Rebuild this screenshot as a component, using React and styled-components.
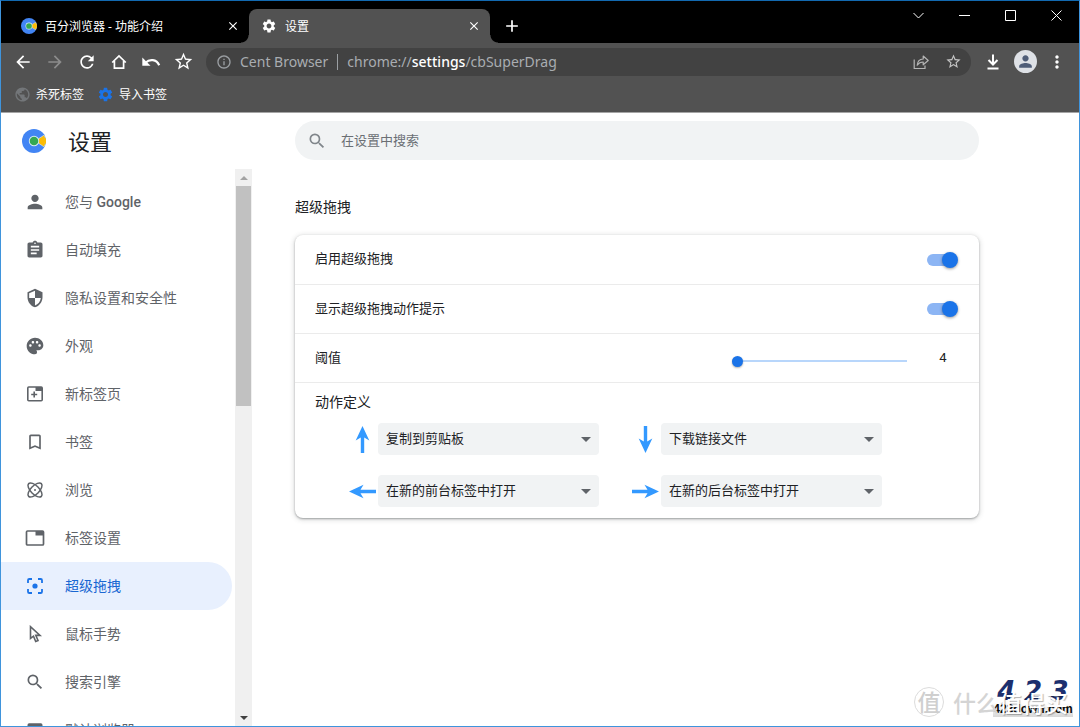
import React, { useState } from "react";
import styled, { createGlobalStyle, css } from "styled-components";
import {
  MdPerson, MdAssignment, MdSecurity, MdPalette, MdBookmarkBorder, MdSearch,
  MdWebAsset, MdSettings, MdPublic, MdStarBorder, MdInfoOutline, MdMoreVert,
  MdRefresh, MdArrowBack, MdArrowForward, MdClose, MdAdd,
} from "react-icons/md";

const uiFont = `"Noto Sans", "Noto Sans CJK SC", sans-serif`;
const pageFont = `Roboto, "Noto Sans CJK SC", sans-serif`;

const GlobalStyle = createGlobalStyle`
  * { box-sizing: border-box; }
  body { margin: 0; background: #fff; font-family: ${pageFont}; }
  button, input, select { font: inherit; color: inherit; }
  h1, h2, h3, ul { margin: 0; padding: 0; font-weight: 400; }
  ul { list-style: none; }
  svg { display: block; flex: none; }
`;

const Window = styled.div`
  position: relative;
  display: flex;
  flex-direction: column;
  height: 100vh;
  overflow: hidden;
  border: 1px solid #3f94dc;
  border-top-color: #1269b0;
`;

/* ---------- tab strip ---------- */

const TabStrip = styled.header`
  display: flex;
  flex: none;
  height: 42px;
  background: #000;
  color: #fff;
  font-family: ${uiFont};
  font-size: 12px;
`;

const Tab = styled.div`
  position: relative;
  display: flex;
  align-items: center;
  gap: 8px;
  flex: 0 1 ${(p) => (p.$active ? 241 : 248)}px;
  min-width: 0;
  margin-top: 8px;
  padding: 0 8px 0 ${(p) => (p.$active ? 12 : 20)}px;
  border-radius: 8px 8px 0 0;
  ${(p) =>
    p.$active &&
    css`
      background: #525252;
      &::before,
      &::after {
        content: "";
        position: absolute;
        bottom: 0;
        width: 8px;
        height: 8px;
      }
      &::before {
        right: 100%;
        background: radial-gradient(circle at 0 0, transparent 7px, #525252 8px);
      }
      &::after {
        left: 100%;
        background: radial-gradient(circle at 100% 0, transparent 7px, #525252 8px);
      }
    `}
`;

const TabTitle = styled.span`
  flex: 1;
  overflow: hidden;
  white-space: nowrap;
`;

const PlainButton = styled.button`
  display: flex;
  align-items: center;
  justify-content: center;
  flex: none;
  width: ${(p) => p.$w || 32}px;
  height: ${(p) => p.$h || 28}px;
  padding: 0;
  border: 0;
  background: none;
  color: ${(p) => p.$tone || "#fff"};
`;

const NewTab = styled(PlainButton)`
  margin: 11px 0 0 6px;
`;

const WindowControls = styled.div`
  display: flex;
  margin-left: auto;
`;

/* ---------- toolbar ---------- */

const Toolbar = styled.div`
  display: flex;
  align-items: center;
  flex: none;
  height: 37px;
  padding: 0 6px;
  background: #525252;
`;

const Omnibox = styled.div`
  display: flex;
  align-items: center;
  flex: 1;
  min-width: 0;
  height: 28px;
  margin: 0 6px 0 7px;
  padding: 0 2px 0 10px;
  border-radius: 14px;
  background: #424242;
  color: #9b9fa3;
`;

const Address = styled.div`
  display: flex;
  align-items: center;
  flex: 1;
  min-width: 0;
  gap: 9px;
  margin-left: 8px;
  font-family: ${uiFont};
  font-size: 14px;
  line-height: 20px;
  color: #a9adb1;
  white-space: nowrap;
  overflow: hidden;

  b {
    font-weight: 500;
    color: #fff;
  }
`;

const AddressDivider = styled.span`
  width: 1px;
  height: 16px;
  background: #9b9fa3;
`;

const Avatar = styled.span`
  display: flex;
  align-items: center;
  justify-content: center;
  width: 23px;
  height: 23px;
  border-radius: 50%;
  background: #dee1e6;
  color: #4f5d78;
`;

const BookmarkBar = styled.nav`
  display: flex;
  align-items: center;
  flex: none;
  gap: 13px;
  height: 33px;
  padding: 0 13px 4px;
  background: #525252;
  border-bottom: 1px solid #a5a5a5;
`;

const Bookmark = styled.a`
  display: flex;
  align-items: center;
  gap: 5px;
  color: #fff;
  font-family: ${uiFont};
  font-size: 12px;
  text-decoration: none;
`;

/* ---------- settings page ---------- */

const Page = styled.div`
  display: flex;
  flex: 1;
  min-height: 0;
  background: #fff;
`;

const Sidebar = styled.aside`
  display: flex;
  flex-direction: column;
  flex: none;
  width: 251px;
`;

const Brand = styled.div`
  display: flex;
  align-items: center;
  flex: none;
  gap: 22px;
  height: 56px;
  padding-left: 21px;

  h1 {
    padding-top: 4px;
    font-size: 22px;
    line-height: 28px;
    color: #202124;
  }
`;

const NavArea = styled.div`
  display: flex;
  flex: 1;
  min-height: 0;
`;

const NavList = styled.ul`
  flex: 1;
  overflow: hidden;
  padding: 9px 3px 0 0;
`;

const NavLink = styled.a`
  display: flex;
  align-items: center;
  gap: 20px;
  height: 48px;
  padding-left: 24px;
  border-radius: 0 24px 24px 0;
  background: ${(p) => (p.$active ? "#e8f0fe" : "transparent")};
  color: ${(p) => (p.$active ? "#1967d2" : "#5f6368")};
  font-size: 14px;
  line-height: 20px;
  text-decoration: none;

  b {
    font-weight: 500;
  }
`;

const NavIcon = styled.span`
  display: flex;
  justify-content: center;
  width: 20px;
`;

const ScrollTrack = styled.div`
  display: flex;
  flex-direction: column;
  flex: none;
  width: 17px;
  background: #f0f0f0;
`;

const ScrollArrow = styled.span`
  display: flex;
  align-items: center;
  justify-content: center;
  flex: none;
  height: 17px;
  color: ${(p) => p.$tone};
`;

const ScrollRail = styled.span`
  flex: 1;
  padding: 0 1px;
`;

const ScrollThumb = styled.span`
  display: block;
  height: 42%;
  background: #c1c1c1;
`;

const Main = styled.main`
  flex: 1;
  min-width: 0;
  padding: 8px 100px 24px 43px;
`;

const SearchBox = styled.label`
  display: flex;
  align-items: center;
  gap: 14px;
  height: 39px;
  padding: 0 12px;
  border-radius: 20px;
  background: #f1f3f4;
  color: #80868b;

  input {
    flex: 1;
    min-width: 0;
    padding: 0;
    border: 0;
    outline: 0;
    background: none;
    font-size: 13px;
    color: #202124;
  }
  input::placeholder {
    color: #6b6f74;
    opacity: 1;
  }
`;

const SectionTitle = styled.h2`
  margin: 37px 0 18px;
  font-size: 14px;
  line-height: 20px;
  color: #202124;
`;

const Card = styled.section`
  border-radius: 8px;
  background: #fff;
  box-shadow: 0 1px 2px rgba(60, 64, 67, 0.4), 0 1px 5px 1px rgba(60, 64, 67, 0.18);
  color: #202124;
  font-size: 13px;
`;

const Row = styled.div`
  display: flex;
  align-items: center;
  justify-content: space-between;
  height: 49px;
  padding: 0 20px;

  label {
    padding-bottom: 4px;
  }
  & + & {
    border-top: 1px solid #ebebeb;
  }
`;

const Switch = styled.input.attrs({ type: "checkbox", role: "switch" })`
  appearance: none;
  display: flex;
  align-items: center;
  width: 28px;
  height: 12px;
  margin: 0 4px 0 0;
  border-radius: 6px;
  background: #bdc1c6;

  &::before {
    content: "";
    flex: none;
    width: 16px;
    height: 16px;
    border-radius: 50%;
    background: #fff;
    box-shadow: 0 1px 3px rgba(0, 0, 0, 0.4);
  }
  &:checked {
    background: #8cb5f4;
  }
  &:checked::before {
    margin-left: 15px;
    background: #1a73e8;
  }
`;

const SliderGroup = styled.div`
  display: flex;
  align-items: center;
  gap: 20px;
`;

const Slider = styled.input.attrs({ type: "range" })`
  appearance: none;
  width: 175px;
  height: 12px;
  margin: 6px 0 0;
  background: linear-gradient(#b8d6fb, #b8d6fb) center / 100% 2px no-repeat;

  &::-webkit-slider-thumb {
    appearance: none;
    width: 11px;
    height: 11px;
    border-radius: 50%;
    background: #1a73e8;
    box-shadow: 0 1px 2px rgba(0, 0, 0, 0.3);
  }
`;

const SliderValue = styled.output`
  width: 32px;
  padding-bottom: 2px;
  text-align: center;
`;

const Actions = styled.div`
  padding: 9px 20px 11px;
  border-top: 1px solid #ebebeb;

  h3 {
    font-size: 14px;
    line-height: 20px;
  }
`;

const ActionGrid = styled.div`
  display: grid;
  grid-template-columns: repeat(2, minmax(0, 250px));
  gap: 20px 33px;
  margin: 11px 0 0 34px;
`;

const ActionField = styled.label`
  display: flex;
  align-items: center;
  gap: 2px;
`;

const SelectBox = styled.span`
  position: relative;
  flex: 1;
  min-width: 0;
  color: #5f6368;

  select {
    appearance: none;
    display: block;
    width: 100%;
    height: 32px;
    padding: 0 24px 2px 8px;
    border: 0;
    border-radius: 4px;
    background: #f1f3f4;
    color: #202124;
    font-size: 13px;
  }
  svg {
    position: absolute;
    right: 8px;
    top: 14px;
    pointer-events: none;
  }
`;

/* ---------- watermarks ---------- */

const Watermark = styled.div`
  position: absolute;
  right: 6px;
  bottom: 9px;
  display: grid;
  justify-items: end;
  align-items: end;
  pointer-events: none;

  > * {
    grid-area: 1 / 1;
  }
`;

const SiteMark = styled.div`
  width: 80px;
  background: linear-gradient(#fff 60%, #d8d8d8);
  color: #0a0a0a;
  text-align: center;
  font: 700 12px/16px "Liberation Sans", sans-serif;
`;

const SiteDigits = styled.div`
  display: flex;
  justify-content: space-around;
  color: #1c2f6e;
  font: italic 700 26px/19px "DejaVu Sans", sans-serif;
`;

const StampMark = styled.div`
  display: flex;
  align-items: center;
  gap: 9px;
  padding-right: 5px;
  color: #fff;
  font: 500 23px/30px "Noto Sans CJK SC", sans-serif;
  text-shadow: 1px 1px 1px rgba(0, 0, 0, 0.3);

  i {
    font-style: normal;
    color: #d4d4d4;
    text-shadow: none;
  }
`;

const Stamp = styled.span`
  width: 30px;
  height: 30px;
  border: 1px solid #dcdcdc;
  border-radius: 50%;
  text-align: center;
  line-height: 27px;
  color: #cfcfcf;
  text-shadow: none;
`;

/* ---------- icons ---------- */

const CentLogo = ({ size }) => (
  <svg width={size} height={size} viewBox="0 0 24 24" aria-hidden="true">
    <circle cx="12" cy="12" r="12" fill="#4285f4" />
    <path d="M13 12 22 6.200A12 12 0 0 1 22 17.800Z" fill="#fbbc05" stroke="#dcecf5" strokeWidth=".6" />
    <path d="M21 6A11 11 0 0 1 21 18L24 14V10Z" fill="#fbbc05" />
    <circle cx="12" cy="12" r="5.200" fill="#dcecf5" />
    <circle cx="12" cy="12" r="4.300" fill="#34a853" />
  </svg>
);

const Line = ({ size = 18, box = 18, width = 1.8, children, ...rest }) => (
  <svg width={size} height={size} viewBox={`0 0 ${box} ${box}`} fill="none"
    stroke="currentColor" strokeWidth={width} aria-hidden="true" {...rest}>
    {children}
  </svg>
);

const HomeIcon = () => (
  <Line width={1.7}>
    <path d="M2.200 9.500 9 3l6.800 6.500M4.400 8V15.200h9.200V8" />
  </Line>
);

const UndoIcon = () => (
  <svg width="20" height="18" viewBox="0 0 20 18" aria-hidden="true">
    <path d="M1.300 4.500v8.200h8.200z" fill="currentColor" />
    <path d="M4.500 9.700C8.500 5.800 15.500 6 18.200 12.200" fill="none" stroke="currentColor" strokeWidth="2.200" />
  </svg>
);

const ShareIcon = () => (
  <Line width={1.2}>
    <path d="M2.200 6.500V15.500H13V12.500" />
    <path d="M5.200 12.200C5.500 8.200 7.700 6.200 11.200 6V3l5 4.500-5 4.300V9C8.500 9 6.700 10 5.200 12.200Z" strokeLinejoin="round" />
  </Line>
);

const DownloadIcon = () => (
  <Line width={2}>
    <path d="M9 1.500V11M4.500 7 9 11.500 13.500 7M3.500 15.500h11" />
  </Line>
);

const NewTabPageIcon = () => (
  <Line width={1.6}>
    <rect x="1.800" y="2" width="14.400" height="13.800" rx="1" />
    <path d="M9.500 2h6.500v4h-6.500z" fill="currentColor" stroke="none" />
    <path d="M8.200 6.500v6M5.200 9.500h6" />
  </Line>
);

const AtomIcon = () => (
  <Line width={1.5}>
    <ellipse cx="9" cy="9" rx="9" ry="4.200" transform="rotate(45 9 9)" />
    <ellipse cx="9" cy="9" rx="9" ry="4.200" transform="rotate(-45 9 9)" />
    <circle cx="9" cy="9" r="1" fill="currentColor" stroke="none" />
  </Line>
);

const TabIcon = () => (
  <Line size={20} box={20} width={1.7}>
    <rect x="1.500" y="3" width="17" height="14" rx="1" />
    <path d="M10.500 3h8v4.500h-8z" fill="currentColor" stroke="none" />
  </Line>
);

const FocusIcon = () => (
  <Line width={1.8} color="#1a73e8">
    <path d="M2 6V3.300Q2 2 3.300 2H6M12 2h2.700Q16 2 16 3.300V6M16 12v2.700Q16 16 14.700 16H12M6 16H3.300Q2 16 2 14.700V12" />
    <circle cx="9" cy="9" r="2.600" fill="currentColor" stroke="none" />
  </Line>
);

const CursorIcon = () => (
  <Line width={1.6}>
    <path d="M4.500 1.700V13.500L7.500 11.200 9.700 16.500 12 15.500 9.800 10.400H14Z" />
  </Line>
);

const arrowTurn = { up: 0, right: 90, down: 180, left: 270 };

const DirectionArrow = ({ to }) => (
  <svg width="27" height="27" viewBox="0 0 27 27" aria-label={to} role="img">
    <path
      transform={`rotate(${arrowTurn[to]} 13.5 13.5)`}
      d="M13.500 0 20.300 14.500 15.200 11.500V27H11.800V11.500L6.700 14.500Z"
      fill="#3399ff"
    />
  </svg>
);

const Triangle = ({ width = 10, flip }) => (
  <svg width={width} height={width / 2} viewBox="0 0 10 5" aria-hidden="true">
    <path d={flip ? "M0 5 5 0l5 5z" : "M0 0h10L5 5z"} fill="currentColor" />
  </svg>
);

/* ---------- data ---------- */

const navItems = [
  { label: <>您与 <b>Google</b></>, icon: <MdPerson size={22} /> },
  { label: "自动填充", icon: <MdAssignment size={20} /> },
  { label: "隐私设置和安全性", icon: <MdSecurity size={20} /> },
  { label: "外观", icon: <MdPalette size={20} /> },
  { label: "新标签页", icon: <NewTabPageIcon /> },
  { label: "书签", icon: <MdBookmarkBorder size={20} /> },
  { label: "浏览", icon: <AtomIcon /> },
  { label: "标签设置", icon: <TabIcon /> },
  { label: "超级拖拽", icon: <FocusIcon />, active: true },
  { label: "鼠标手势", icon: <CursorIcon /> },
  { label: "搜索引擎", icon: <MdSearch size={20} /> },
  { label: "默认浏览器", icon: <MdWebAsset size={20} /> },
];

const actions = [
  { to: "up", value: "复制到剪贴板" },
  { to: "down", value: "下载链接文件" },
  { to: "left", value: "在新的前台标签中打开" },
  { to: "right", value: "在新的后台标签中打开" },
];

const actionOptions = actions.map((a) => a.value);

export default function App() {
  const [threshold, setThreshold] = useState(4);

  return (
    <Window>
      <GlobalStyle />
      <TabStrip>
        <Tab>
          <CentLogo size={16} />
          <TabTitle>百分浏览器 - 功能介绍</TabTitle>
          <PlainButton $w={16} $h={16} aria-label="关闭"><MdClose size={14} /></PlainButton>
        </Tab>
        <Tab $active>
          <MdSettings size={16} />
          <TabTitle>设置</TabTitle>
          <PlainButton $w={16} $h={16} aria-label="关闭"><MdClose size={14} /></PlainButton>
        </Tab>
        <NewTab aria-label="新标签页"><MdAdd size={20} /></NewTab>
        <WindowControls>
          <PlainButton $w={46} aria-label="搜索标签页">
            <Line size={11} box={11} width={1}><path d="M.5 3 5.500 8l5-5" /></Line>
          </PlainButton>
          <PlainButton $w={46} aria-label="最小化">
            <Line size={11} box={11} width={1}><path d="M0 5.500h11" /></Line>
          </PlainButton>
          <PlainButton $w={46} aria-label="最大化">
            <Line size={11} box={11} width={1}><path d="M.5.5h10v10H.5z" /></Line>
          </PlainButton>
          <PlainButton $w={46} aria-label="关闭窗口">
            <Line size={11} box={11} width={1}><path d="M.5.5l10 10M10.500.5l-10 10" /></Line>
          </PlainButton>
        </WindowControls>
      </TabStrip>

      <Toolbar>
        <PlainButton aria-label="后退"><MdArrowBack size={20} /></PlainButton>
        <PlainButton $tone="#8c8c8c" aria-label="前进"><MdArrowForward size={20} /></PlainButton>
        <PlainButton aria-label="刷新"><MdRefresh size={20} /></PlainButton>
        <PlainButton aria-label="主页"><HomeIcon /></PlainButton>
        <PlainButton aria-label="撤销"><UndoIcon /></PlainButton>
        <PlainButton aria-label="添加书签"><MdStarBorder size={21} /></PlainButton>
        <Omnibox>
          <MdInfoOutline size={16} />
          <Address>
            <span>Cent Browser</span>
            <AddressDivider />
            <span>chrome://<b>settings</b>/cbSuperDrag</span>
          </Address>
          <PlainButton $tone="#b4b4b4" aria-label="分享"><ShareIcon /></PlainButton>
          <PlainButton $tone="#c4c4c4" aria-label="为此标签页添加书签"><MdStarBorder size={17} /></PlainButton>
        </Omnibox>
        <PlainButton aria-label="下载"><DownloadIcon /></PlainButton>
        <PlainButton aria-label="用户"><Avatar><MdPerson size={19} /></Avatar></PlainButton>
        <PlainButton aria-label="菜单"><MdMoreVert size={20} /></PlainButton>
      </Toolbar>

      <BookmarkBar>
        <Bookmark href="#kill"><MdPublic size={17} color="#737679" />杀死标签</Bookmark>
        <Bookmark href="#import"><MdSettings size={17} color="#1a73e8" />导入书签</Bookmark>
      </BookmarkBar>

      <Page>
        <Sidebar>
          <Brand>
            <CentLogo size={24} />
            <h1>设置</h1>
          </Brand>
          <NavArea>
            <NavList>
              {navItems.map((item, i) => (
                <li key={i}>
                  <NavLink href="#settings" $active={item.active}>
                    <NavIcon>{item.icon}</NavIcon>
                    <span>{item.label}</span>
                  </NavLink>
                </li>
              ))}
            </NavList>
            <ScrollTrack aria-hidden="true">
              <ScrollArrow $tone="#a3a3a3"><Triangle width={8} flip /></ScrollArrow>
              <ScrollRail><ScrollThumb /></ScrollRail>
              <ScrollArrow $tone="#404040"><Triangle width={8} /></ScrollArrow>
            </ScrollTrack>
          </NavArea>
        </Sidebar>

        <Main>
          <SearchBox>
            <MdSearch size={20} />
            <input type="search" placeholder="在设置中搜索" aria-label="在设置中搜索" />
          </SearchBox>
          <SectionTitle>超级拖拽</SectionTitle>
          <Card>
            <Row>
              <label htmlFor="enable">启用超级拖拽</label>
              <Switch id="enable" defaultChecked />
            </Row>
            <Row>
              <label htmlFor="hint">显示超级拖拽动作提示</label>
              <Switch id="hint" defaultChecked />
            </Row>
            <Row>
              <label htmlFor="threshold">阈值</label>
              <SliderGroup>
                <Slider id="threshold" min={4} max={100} value={threshold}
                  onChange={(e) => setThreshold(Number(e.target.value))} />
                <SliderValue htmlFor="threshold">{threshold}</SliderValue>
              </SliderGroup>
            </Row>
            <Actions>
              <h3>动作定义</h3>
              <ActionGrid>
                {actions.map((a) => (
                  <ActionField key={a.to}>
                    <DirectionArrow to={a.to} />
                    <SelectBox>
                      <select defaultValue={a.value}>
                        {actionOptions.map((o) => <option key={o}>{o}</option>)}
                      </select>
                      <Triangle />
                    </SelectBox>
                  </ActionField>
                ))}
              </ActionGrid>
            </Actions>
          </Card>
        </Main>
      </Page>

      <Watermark>
        <SiteMark>
          <SiteDigits><span>4</span><span>2</span><span>3</span></SiteDigits>
          423down.com
        </SiteMark>
        <StampMark>
          <Stamp>值</Stamp>
          <span><i>什么</i>值得买</span>
        </StampMark>
      </Watermark>
    </Window>
  );
}
